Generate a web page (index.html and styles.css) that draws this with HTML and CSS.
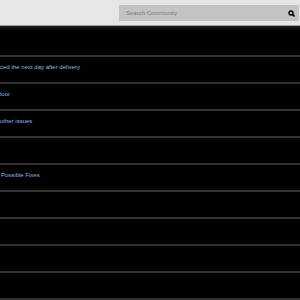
FILE: index.html
```html
<!DOCTYPE html>
<html lang="en">
<head>
  <meta charset="UTF-8">
  <meta name="viewport" content="width=device-width, initial-scale=1.0">
  <title>Community</title>
  <link rel="stylesheet" href="styles.css">
</head>
<body>

  <div class="header">
    <div class="search">
      <span class="search-text">Search Community</span>
      <svg class="search-icon" width="7" height="7" viewBox="0 0 7 7">
        <circle cx="3" cy="3" r="2" fill="none" stroke="#000" stroke-width="1.4"/>
        <line x1="4.4" y1="4.4" x2="6.5" y2="6.5" stroke="#000" stroke-width="1.6"/>
      </svg>
    </div>
  </div>

  <div class="band"></div>

  <div class="list">
    <div class="row"></div>
    <div class="row"><a href="#">ced the next day after delivery</a></div>
    <div class="row"><a href="#">loor</a></div>
    <div class="row"><a href="#">other issues</a></div>
    <div class="row"></div>
    <div class="row"><a href="#" class="indent">Possible Fixes</a></div>
    <div class="row"></div>
    <div class="row"></div>
    <div class="row"></div>
    <div class="row"></div>
  </div>

</body>
</html>
```

FILE: styles.css
```css
* {
  box-sizing: border-box;
  margin: 0;
  padding: 0;
}

body {
  background: #000;
  font-family: "Liberation Sans", Arial, sans-serif;
  overflow: hidden;
}

.header {
  height: 26px;
  background: #e6e6e6;
  border-bottom: 1px solid #9a9a9a;
  display: flex;
  justify-content: flex-end;
  padding: 5px 1px 0 0;
}

.search {
  width: 180px;
  height: 16px;
  background: #c3c3c3;
  display: flex;
  align-items: center;
  justify-content: space-between;
  padding: 0 4px 0 7px;
}

.search-text {
  font-size: 6px;
  color: #7a7a7a;
}

.search-icon {
  display: block;
}

.band {
  height: 4px;
  background: linear-gradient(#1e1e1e, #080808);
}

.row {
  height: 27px;
  border-bottom: 2px solid #333;
  padding-top: 6px;
  font-size: 6px;
  line-height: 8px;
}

.row a {
  color: #8fb8e0;
  text-decoration: none;
}

.row .indent {
  padding-left: 1px;
}
```
